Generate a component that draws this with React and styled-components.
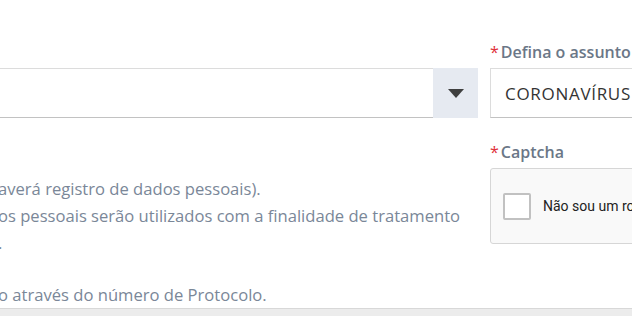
import styled, { createGlobalStyle } from "styled-components";

const Global = createGlobalStyle`
  html, body {
    margin: 0;
    padding: 0;
    background: #fff;
    overflow: hidden;
  }
  body {
    font-family: "Open Sans", "Liberation Sans", sans-serif;
  }
`;

const Page = styled.div`
  width: 632px;
  height: 316px;
  display: flex;
  flex-direction: column;
  overflow: hidden;
`;

const Main = styled.div`
  flex: 1;
  display: flex;
  gap: 12px;
  padding-top: 42px;
  overflow: hidden;
`;

const Column = styled.div`
  flex: none;
  width: ${(p) => p.width}px;
  display: flex;
  flex-direction: column;
`;

const Field = styled.div`
  display: flex;
  flex-direction: column;
  margin-bottom: 24px;
`;

const Label = styled.label`
  height: 20px;
  line-height: 20px;
  margin-bottom: 6px;
  font-size: 16px;
  font-weight: 600;
  color: #6b7787;
  white-space: nowrap;
  span {
    color: #e0303a;
    font-weight: 400;
    margin-right: 2px;
  }
`;

const Select = styled.div`
  height: 50px;
  box-sizing: border-box;
  display: flex;
  align-items: stretch;
  background: #fff;
  border: 1px solid #dcdcdc;
  border-bottom-color: #c2c2c2;
  border-left: ${(p) => (p.open ? "none" : "1px solid #dcdcdc")};
`;

const SelectValue = styled.div`
  flex: 1;
  display: flex;
  align-items: center;
  padding-left: 14px;
  font-size: 17px;
  letter-spacing: 0.7px;
  color: #333;
  white-space: nowrap;
`;

const Caret = styled.div`
  width: 45px;
  margin: -1px -1px -1px 0;
  background: #e6eaf1;
  display: flex;
  align-items: center;
  justify-content: center;
`;

const Info = styled.div`
  margin-top: 33px;
  margin-left: -2px;
  font-size: 16.6px;
  line-height: 27px;
  color: #7a8798;
  white-space: nowrap;
  p {
    margin: 0;
  }
  p + p {
    margin-top: 25px;
  }
`;

const CaptchaBox = styled.div`
  height: 76px;
  box-sizing: border-box;
  background: #f9f9f9;
  border: 1px solid #d6d6d6;
  border-radius: 3px;
  display: flex;
  align-items: center;
  padding-left: 12px;
  gap: 12px;
`;

const Check = styled.div`
  width: 28px;
  height: 27px;
  box-sizing: border-box;
  background: #fff;
  border: 2px solid #c1c1c1;
  border-radius: 2px;
`;

const CheckText = styled.span`
  font-family: Roboto, "Liberation Sans", sans-serif;
  font-size: 14px;
  color: #222;
  white-space: nowrap;
`;

const Footer = styled.div`
  height: 7px;
  flex: none;
  background: #ececec;
  border-top: 1px solid #d8d8d8;
`;

export default function App() {
  return (
    <Page>
      <Global />
      <Main>
        <Column width={478}>
          <Field>
            <Label />
            <Select open>
              <SelectValue />
              <Caret>
                <svg width="16" height="9" viewBox="0 0 16 9">
                  <path d="M0 0 H16 L8 9 Z" fill="#3f3f3f" />
                </svg>
              </Caret>
            </Select>
          </Field>
          <Info>
            <p>averá registro de dados pessoais).</p>
            <p style={{ marginTop: 0 }}>
              os pessoais serão utilizados com a finalidade de tratamento
              <br />.
            </p>
            <p>o através do número de Protocolo.</p>
          </Info>
        </Column>
        <Column width={320}>
          <Field>
            <Label>
              <span>*</span>Defina o assunto
            </Label>
            <Select>
              <SelectValue>CORONAVÍRUS</SelectValue>
            </Select>
          </Field>
          <Field>
            <Label>
              <span>*</span>Captcha
            </Label>
            <CaptchaBox>
              <Check />
              <CheckText>Não sou um robô</CheckText>
            </CaptchaBox>
          </Field>
        </Column>
      </Main>
      <Footer />
    </Page>
  );
}
